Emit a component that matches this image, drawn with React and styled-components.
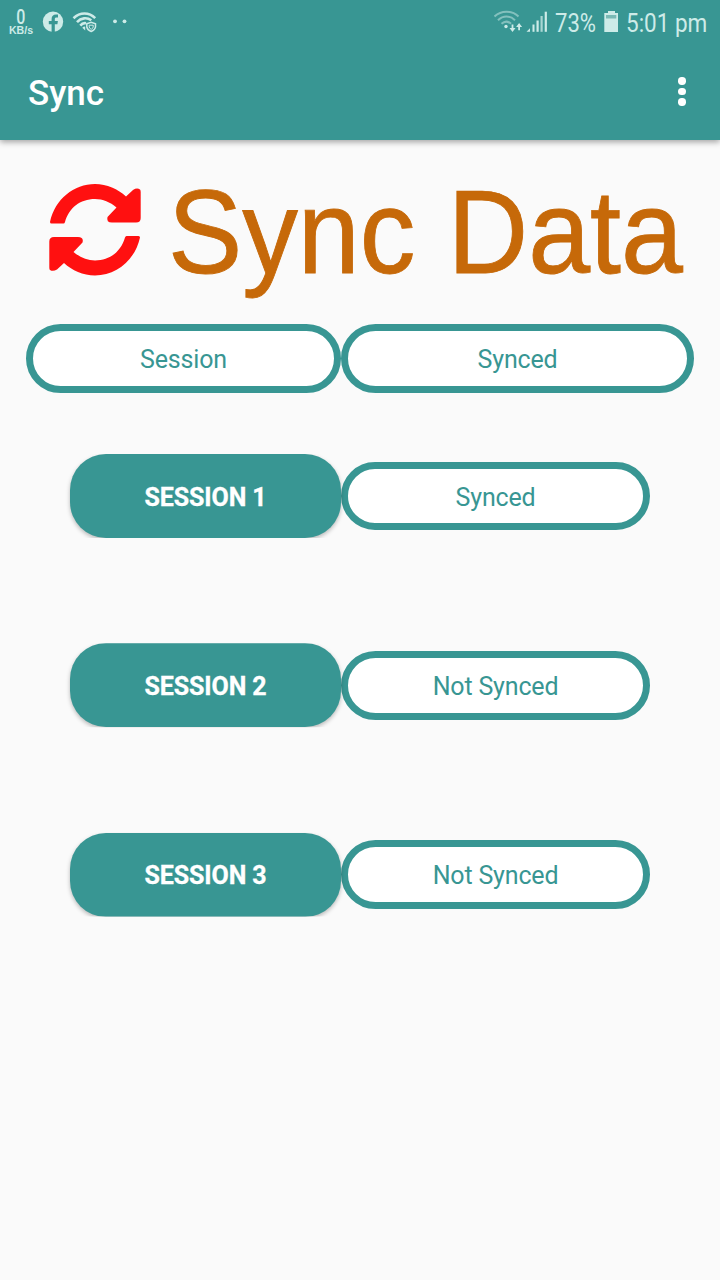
import React from "react";
import styled, { createGlobalStyle } from "styled-components";

const teal = "#389693";

const GlobalStyle = createGlobalStyle`
  *, *::before, *::after { box-sizing: border-box; }
  body { margin: 0; background: #fafafa; font-family: Roboto, "Liberation Sans", sans-serif; }
`;

const Screen = styled.div`
  display: flex;
  flex-direction: column;
  width: 720px;
  height: 1280px;
  overflow: hidden;
  background: #fafafa;
`;

const Header = styled.header`
  height: 140px;
  flex: none;
  background: ${teal};
  box-shadow: 0 2px 6px rgba(0, 0, 0, 0.36);
`;

const StatusBar = styled.div`
  display: flex;
  justify-content: space-between;
  height: 48px;
  padding: 0 13px 0 8px;
  color: #cdebe8;
`;

const StatusGroup = styled.div`
  display: flex;
  align-items: flex-start;
`;

const NetSpeed = styled.div`
  display: flex;
  flex-direction: column;
  align-items: center;
  width: 26px;
  padding-top: 9px;
`;

const SpeedValue = styled.span`
  font-size: 20px;
  font-weight: 500;
  line-height: 16px;
  transform: scaleX(0.8);
`;

const SpeedUnit = styled.span`
  font: 700 10.6px/10px "Liberation Sans", sans-serif;
`;

const StatusIcon = styled.svg`
  display: block;
  height: 48px;
  width: ${(p) => p.$width}px;
  margin-left: ${(p) => p.$gap || 0}px;
`;

const StatusText = styled.span`
  width: ${(p) => p.$width}px;
  margin-left: ${(p) => p.$gap}px;
  font-size: 26px;
  line-height: 46px;
  white-space: nowrap;
  transform: scaleX(${(p) => p.$scale});
  transform-origin: left;
`;

const Toolbar = styled.div`
  display: flex;
  align-items: center;
  justify-content: space-between;
  height: 92px;
  padding: 0 34.5px 5px 28px;
`;

const ToolbarTitle = styled.h1`
  margin: 0;
  padding-top: 4px;
  color: #fff;
  font-size: 35px;
  font-weight: 500;
  line-height: 44px;
`;

const MenuButton = styled.button`
  display: flex;
  flex-direction: column;
  gap: 3px;
  margin: 0;
  padding: 0;
  border: 0;
  background: none;
`;

const MenuDot = styled.span`
  width: 7.4px;
  height: 7.4px;
  border-radius: 50%;
  background: #fff;
`;

const Content = styled.main`
  display: flex;
  flex-direction: column;
`;

const Banner = styled.div`
  display: flex;
  align-items: flex-start;
  height: 184px;
  padding: 44px 0 0 49px;
`;

const SyncIcon = styled.svg`
  display: block;
  flex: none;
  width: 92px;
  height: 92px;
`;

const BannerTitle = styled.h2`
  width: 520px;
  margin: -19.5px 0 0 26.5px;
  color: #c66909;
  font: 400 118px/134px "Liberation Sans", Arial, sans-serif;
  word-spacing: 1.6px;
  white-space: nowrap;
  -webkit-text-stroke: 0.9px #c66909;
  transform: scaleX(0.943);
  transform-origin: left;
`;

const ColumnHeads = styled.div`
  display: flex;
  padding-left: 26px;
`;

const Pill = styled.div`
  display: flex;
  align-items: center;
  justify-content: center;
  width: ${(p) => p.$width}px;
  height: 68.5px;
  padding-top: 2px;
  border: 7px solid ${teal};
  border-radius: 36px;
  background: #fff;
  color: ${teal};
  font-size: 25px;
  letter-spacing: -0.18px;
`;

const SessionList = styled.div`
  display: flex;
  flex-direction: column;
  gap: 105.3px;
  padding: 61.5px 0 0 70px;
`;

const SessionRow = styled.div`
  display: flex;
  align-items: center;
  height: 84px;
`;

const SessionButton = styled.button`
  width: 271px;
  height: 84px;
  padding: 2px 0 0;
  border: 0;
  border-radius: 36px;
  background: ${teal};
  box-shadow: 0 2px 4px rgba(0, 0, 0, 0.26);
  clip-path: inset(0 -6px 0 -6px);
  color: #fff;
  font: 700 25px Roboto, sans-serif;
  letter-spacing: -0.1px;
  -webkit-text-stroke: 0.3px #fff;
`;

const sessions = [
  { name: "SESSION 1", status: "Synced" },
  { name: "SESSION 2", status: "Not Synced" },
  { name: "SESSION 3", status: "Not Synced" },
];

const arrow =
  "M2.5 39.5Q1 39.5 1 38C6 15 25 0 46 0C58 0 69 5 77 12.5L84 6Q88 3.5 91 5.5Q91.7 6 91.7 8V34Q91.7 38.5 87 38.5H63Q57 38.5 58.5 33L67.5 23.5C61 18 54 15 46 15C31 15 20 24 16 38Q15.5 39.5 14.5 39.5Z";

export default function App() {
  return (
    <>
      <GlobalStyle />
      <Screen>
        <Header>
          <StatusBar>
            <StatusGroup>
              <NetSpeed>
                <SpeedValue>0</SpeedValue>
                <SpeedUnit>KB/s</SpeedUnit>
              </NetSpeed>
              <StatusIcon $width={22} $gap={8} viewBox="42 0 22 48">
                <circle cx="53" cy="21.7" r="10.2" fill="currentColor" />
                <path
                  d="M51.6 32V24.2H48.8V21H51.6V19C51.6 16 53.2 14.5 56 14.5H58V17.4H56.7C55.2 17.4 54.8 18 54.8 19.2V21H57.9L57.4 24.2H54.8V32Z"
                  fill={teal}
                />
              </StatusIcon>
              <StatusIcon $width={26} $gap={8} viewBox="72 0 26 48">
                <g fill="none" stroke="currentColor" strokeWidth="2.6">
                  <path d="M73.5 18.2C80 12 89 12 95.2 18.2" />
                  <path d="M77 22.1C81 17.7 87 17.2 91.3 20.2" />
                  <path d="M80.3 25.6C82 23.5 84 22.9 86 23.3" />
                </g>
                <path d="M82.3 27.7Q84 26.2 85.2 26.7V30.5Z" fill="currentColor" />
                <path
                  d="M86.8 23.7L91.2 22.3L95.5 23.7V27Q95 30 91.2 31.5Q87.4 30 86.8 27Z"
                  fill={teal}
                  stroke="currentColor"
                  strokeWidth="1.5"
                />
                <path d="M89.2 25.2H93.2V27Q93 28.5 91.2 29.3Q89.4 28.5 89.2 27Z" fill="none" stroke="currentColor" />
              </StatusIcon>
              <StatusIcon $width={16} $gap={14} viewBox="112 0 16 48">
                <circle cx="115" cy="21.3" r="1.9" fill="currentColor" />
                <circle cx="124.5" cy="21.3" r="1.9" fill="currentColor" />
              </StatusIcon>
            </StatusGroup>
            <StatusGroup>
              <StatusIcon $width={54} viewBox="494 0 54 48">
                <g fill="none" stroke="currentColor" strokeWidth="2" opacity="0.5">
                  <path d="M494.5 16.5C501 10 512 10 518.5 16.5" />
                  <path d="M498 20.2C503 15.2 510 15.2 515 20.2" />
                  <path d="M501.5 23.8C504.5 21 508 21 511 23.8" />
                </g>
                <circle cx="506" cy="26.5" r="1.7" fill="currentColor" />
                <path
                  d="M511.6 24.5H513.4V28H515.5L512.5 32L509.5 28H511.6ZM518.2 30.3V26.9H516.1L519.1 22.9L522.1 26.9H520V30.3Z"
                  fill="currentColor"
                />
                <path d="M526.5 31.8L530 28.3V31.8Z" fill="currentColor" />
                <g fill="currentColor">
                  <rect x="532.5" y="24.5" width="2" height="7.3" />
                  <rect x="536.5" y="20.5" width="2.2" height="11.3" />
                  <rect x="540.5" y="16" width="2.2" height="15.8" opacity="0.75" />
                  <rect x="544.7" y="11.7" width="2.2" height="20.1" />
                </g>
              </StatusIcon>
              <StatusText $width={41} $gap={7} $scale={0.85}>73%</StatusText>
              <StatusIcon $width={15} $gap={8} viewBox="604 0 15 48">
                <path d="M608 11H615V13H618V32H604.3V13H608Z" fill="currentColor" />
                <path d="M606 15H616.3V18.5H606Z" fill="#79b9b5" />
              </StatusIcon>
              <StatusText $width={81} $gap={7} $scale={0.865}>5:01 pm</StatusText>
            </StatusGroup>
          </StatusBar>
          <Toolbar>
            <ToolbarTitle>Sync</ToolbarTitle>
            <MenuButton aria-label="More options">
              <MenuDot />
              <MenuDot />
              <MenuDot />
            </MenuButton>
          </Toolbar>
        </Header>
        <Content>
          <Banner>
            <SyncIcon viewBox="0 0 92 92" fill="#ff1010">
              <path d={arrow} />
              <path d={arrow} transform="rotate(180 46 45.7)" />
            </SyncIcon>
            <BannerTitle>Sync Data</BannerTitle>
          </Banner>
          <ColumnHeads>
            <Pill $width={315}>Session</Pill>
            <Pill $width={353}>Synced</Pill>
          </ColumnHeads>
          <SessionList>
            {sessions.map((s) => (
              <SessionRow key={s.name}>
                <SessionButton>{s.name}</SessionButton>
                <Pill $width={309}>{s.status}</Pill>
              </SessionRow>
            ))}
          </SessionList>
        </Content>
      </Screen>
    </>
  );
}
